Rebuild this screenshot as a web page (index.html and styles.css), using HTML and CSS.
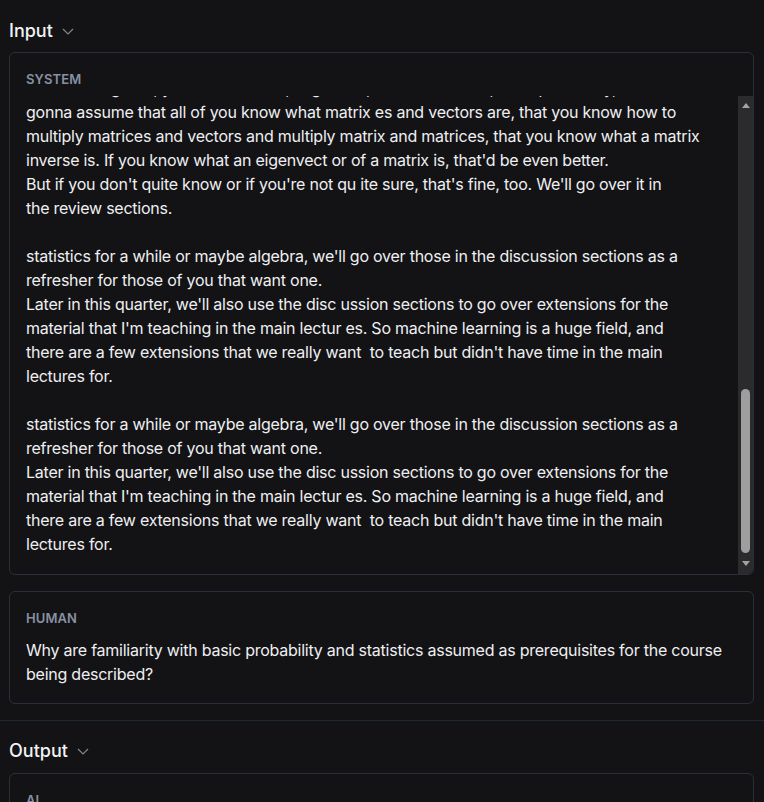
FILE: index.html
```
<!DOCTYPE html>
<html lang="en">
<head>
<meta charset="utf-8">
<title>Run</title>
<link rel="stylesheet" href="styles.css">
</head>
<body>
<section class="section">
  <div class="section-head">
    <span class="section-title">Input</span>
    <svg class="chev" width="12" height="12" viewBox="0 0 12 12"><polyline points="1,4 6,9 11,4" fill="none" stroke="currentColor" stroke-width="1.2"/></svg>
  </div>
  <div class="stack">
    <div class="card card-system">
      <div class="label">System</div>
      <div class="scroll">
        <div class="scroll-view">
          <div class="msg msg-scroll">So let me just say a few words about the prerequisites of this class.
For linear algebra, you should know, in general, what a matrix is, and specifically, I'm
gonna assume that all of you know what matrix es and vectors are, that you know how to
multiply matrices and vectors and multiply matrix and matrices, that you know what a matrix
inverse is. If you know what an eigenvect or of a matrix is, that'd be even better.
But if you don't quite know or if you're not qu ite sure, that's fine, too. We'll go over it in
the review sections.

statistics for a while or maybe algebra, we'll go over those in the discussion sections as a
refresher for those of you that want one.
Later in this quarter, we'll also use the disc ussion sections to go over extensions for the
material that I'm teaching in the main lectur es. So machine learning is a huge field, and
there are a few extensions that we really want  to teach but didn't have time in the main
lectures for.

statistics for a while or maybe algebra, we'll go over those in the discussion sections as a
refresher for those of you that want one.
Later in this quarter, we'll also use the disc ussion sections to go over extensions for the
material that I'm teaching in the main lectur es. So machine learning is a huge field, and
there are a few extensions that we really want  to teach but didn't have time in the main
lectures for.</div>
        </div>
        <div class="scrollbar">
          <span class="sb-btn sb-up"><span class="tri tri-up"></span></span>
          <div class="sb-track"><span class="sb-thumb"></span></div>
          <span class="sb-btn sb-down"><span class="tri tri-down"></span></span>
        </div>
      </div>
    </div>
    <div class="card card-plain">
      <div class="label">Human</div>
      <div class="msg">Why are familiarity with basic probability and statistics assumed as prerequisites for the course being described?</div>
    </div>
  </div>
</section>
<section class="section section-output">
  <div class="section-head">
    <span class="section-title">Output</span>
    <svg class="chev" width="12" height="12" viewBox="0 0 12 12"><polyline points="1,4 6,9 11,4" fill="none" stroke="currentColor" stroke-width="1.2"/></svg>
  </div>
  <div class="stack">
    <div class="card card-plain">
      <div class="label">AI</div>
      <div class="msg">Familiarity with basic probability and statistics is assumed because machine learning relies heavily on these concepts.</div>
    </div>
  </div>
</section>
</body>
</html>
```
FILE: styles.css
```
html, body {
  margin: 0;
  padding: 0;
  height: 100%;
  overflow: hidden;
}
body {
  background: #131316;
  color: #ececee;
  font-family: Inter, "Noto Sans", "Liberation Sans", sans-serif;
}
.section {
  padding: 8px 10px 16px 9px;
}
.section-output {
  border-top: 1px solid #1d2733;
  padding-top: 7px;
}
.section-head {
  height: 44px;
  display: flex;
  align-items: center;
  gap: 9px;
}
.section-output .section-head {
  height: 45px;
}
.section-title {
  font-size: 18px;
  font-weight: 500;
  color: #f2f2f4;
}
.chev {
  color: #85868c;
  margin-top: 1px;
}
.stack {
  display: flex;
  flex-direction: column;
  gap: 16px;
}
.card {
  border: 1px solid #2a303a;
  border-radius: 6px;
  background: #131316;
}
.card-plain {
  padding: 16px 16px 17px;
}
.card-system {
  padding-top: 16px;
  overflow: hidden;
}
.card-system .label {
  padding: 0 16px;
  margin-bottom: 7px;
}
.label {
  font-size: 13px;
  line-height: 20px;
  font-weight: 600;
  text-transform: uppercase;
  color: #8791a3;
  letter-spacing: 0.1px;
}
.card-plain .label {
  margin-bottom: 10px;
}
.msg {
  font-size: 16px;
  line-height: 24px;
  color: #efeff1;
  letter-spacing: -0.24px;
  white-space: pre-wrap;
}
.scroll {
  display: flex;
  height: 478px;
}
.scroll-view {
  flex: 1;
  min-width: 0;
  overflow: hidden;
  display: flex;
  flex-direction: column;
  justify-content: flex-end;
  padding: 0 0 18px 16px;
}
.msg-scroll {
  flex-shrink: 0;
}
.scrollbar {
  width: 15px;
  flex-shrink: 0;
  background: #2b2b2d;
  display: flex;
  flex-direction: column;
}
.sb-btn {
  height: 17px;
  display: flex;
  justify-content: center;
  box-sizing: border-box;
}
.sb-up {
  padding-top: 7px;
}
.sb-down {
  padding-top: 4px;
}
.sb-track {
  flex: 1;
  display: flex;
  flex-direction: column;
  justify-content: flex-end;
  align-items: center;
  padding-bottom: 4px;
}
.sb-thumb {
  width: 9px;
  height: 164px;
  border-radius: 5px;
  background: #9e9e9e;
}
.tri {
  width: 0;
  height: 0;
  border-left: 4px solid transparent;
  border-right: 4px solid transparent;
}
.tri-up {
  border-bottom: 5px solid #a3a3a3;
}
.tri-down {
  border-top: 5px solid #a3a3a3;
}
```
